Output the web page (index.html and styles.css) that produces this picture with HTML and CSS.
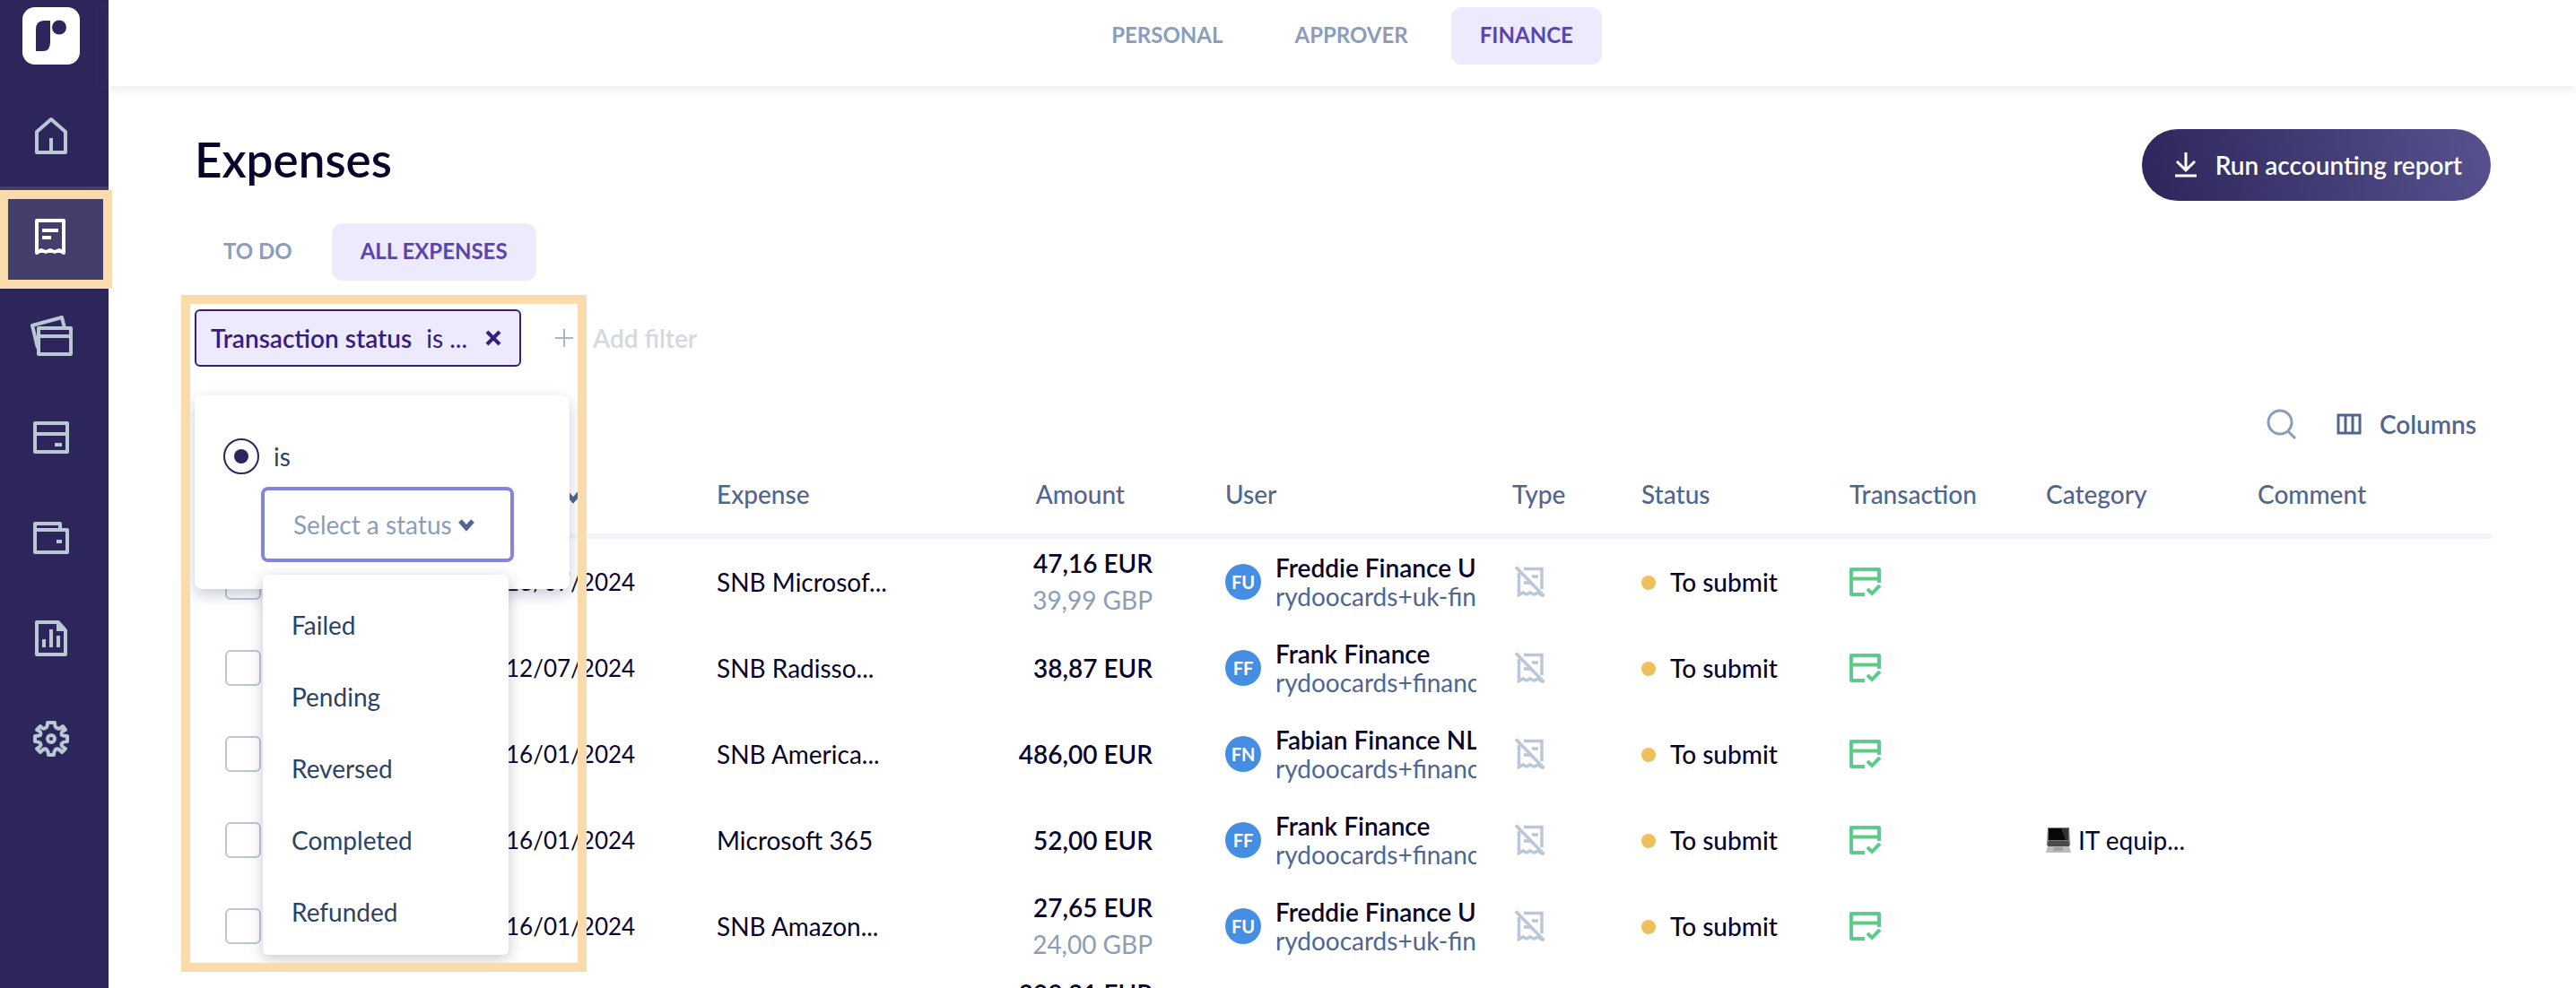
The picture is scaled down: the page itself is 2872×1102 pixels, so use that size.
FILE: index.html
```html
<!DOCTYPE html>
<html lang="en">

<head>
    <meta charset="UTF-8">
    <meta name="viewport" content="width=device-width, initial-scale=1.0">
    <title>Expenses</title>
    <link rel="stylesheet" href="styles.css">
</head>

<body>
    <!-- shared icons for the table rows -->
    <svg class="sprite" aria-hidden="true">
        <symbol id="no-receipt" viewBox="0 0 36 36">
            <g fill="none" stroke="currentColor" stroke-width="3.500">
                <path d="M11 3.500H31V26M5.500 8V32.500L10 30L14 32L18 30L22.500 32L27 30L32 33.500" />
                <path d="M2 1.500L33.500 34M11 19H20M11 12H14M20 12H27" />
            </g>
        </symbol>
        <symbol id="card-check" viewBox="0 0 36 32">
            <g fill="none" stroke="currentColor" stroke-width="4" stroke-linejoin="round">
                <path d="M17 30H2V2H33V17M2 12.500H33" />
                <path d="M20 24L25 29L34 20" stroke-linejoin="miter" />
            </g>
        </symbol>
    </svg>

    <div class="app">
        <nav class="sidebar" aria-label="Main">
            <a href="#" class="logo" aria-label="Home page">
                <svg width="64" height="64" viewBox="0 0 64 64">
                    <rect width="64" height="64" rx="14" fill="#fff" />
                    <path d="M15 25Q15 15 24 15H31V39Q31 49 23 49H15Z" fill="#2d265b" />
                    <circle cx="41" cy="22.500" r="8" fill="#2d265b" />
                </svg>
            </a>
            <a href="#" class="nav-item" aria-label="Home">
                <svg width="48" height="48" viewBox="0 0 48 48">
                    <path d="M8 42V19L24 5L40 19V42ZM24 26V42" />
                </svg>
            </a>
            <a href="#" class="nav-item active" aria-label="Expenses">
                <svg width="48" height="48" viewBox="0 0 48 48">
                    <path d="M8 42V6H38V42L33 39L28 41L23 39L18 41L13 39ZM14 17H32M14 25H24" />
                </svg>
            </a>
            <a href="#" class="nav-item" aria-label="Cards">
                <svg width="48" height="48" viewBox="0 0 48 48">
                    <path d="M9 36L3 11L36 2L39 14M10 14H46V43H10ZM10 23H46" />
                </svg>
            </a>
            <a href="#" class="nav-item" aria-label="Transactions">
                <svg width="48" height="48" viewBox="0 0 48 48">
                    <path d="M6 8H42V40H6ZM6 20H42M28 32H36" />
                </svg>
            </a>
            <a href="#" class="nav-item" aria-label="Wallet">
                <svg width="48" height="48" viewBox="0 0 48 48">
                    <path d="M34 15V8H6V40H42V15H6M30 28H36" />
                </svg>
            </a>
            <a href="#" class="nav-item" aria-label="Reports">
                <svg width="48" height="48" viewBox="0 0 48 48">
                    <path d="M8 6H32L40 15V42H8ZM16 25V34M24 14V34M32 21V34" />
                    <path class="solid" d="M30 5L41 16H30Z" />
                </svg>
            </a>
            <a href="#" class="nav-item" aria-label="Settings">
                <svg width="48" height="48" viewBox="0 0 48 48">
                    <path d="M20 6H28Q28 12 31 12Q33 14 37 10L40 14Q34 16 36 20Q38 21 42 21V27Q38 27 36 29Q34 32 40 35L36 39Q32 34 29 36Q27 38 27 42H21Q21 38 19 36Q16 34 12 39L8 35Q14 32 12 29Q10 27 6 27V21Q10 21 12 20Q14 16 8 14L12 10Q15 14 17 12Q20 12 20 6Z" />
                    <circle cx="24" cy="24" r="4" />
                </svg>
            </a>
        </nav>

        <div class="page">
            <header class="topbar">
                <a href="#" class="tab">PERSONAL</a>
                <a href="#" class="tab">APPROVER</a>
                <a href="#" class="tab selected">FINANCE</a>
            </header>

            <main class="content">
                <div class="title-row">
                    <h1>Expenses</h1>
                    <button class="report-button">
                        <svg width="26" height="28" viewBox="0 0 26 28" fill="none" stroke="currentColor" stroke-width="3">
                            <path d="M13 0V20M3 10L13 20L23 10M1 26H25" />
                        </svg>
                        Run accounting report
                    </button>
                </div>

                <div class="tabs">
                    <a href="#" class="tab">TO DO</a>
                    <a href="#" class="tab selected">ALL EXPENSES</a>
                </div>

                <div class="filters">
                    <div class="chip">
                        <button class="chip-label"><strong>Transaction status</strong><span>is ...</span></button>
                        <button class="chip-remove" aria-label="Remove filter">
                            <svg width="18" height="18" viewBox="0 0 18 18" fill="none" stroke="currentColor" stroke-width="4">
                                <path d="M2 2L16 16M16 2L2 16" />
                            </svg>
                        </button>
                    </div>
                    <button class="add-filter">
                        <svg width="20" height="20" viewBox="0 0 20 20" fill="none" stroke="currentColor" stroke-width="2">
                            <path d="M10 0V20M0 10H20" />
                        </svg>
                        Add filter
                    </button>

                    <div class="popover">
                        <label class="radio-row">
                            <input type="radio" name="operator" checked>
                            is
                        </label>
                        <div class="select-box">
                            <select aria-label="Transaction status">
                                <option>Select a status</option>
                            </select>
                            <svg class="chevron" width="18" height="14" viewBox="0 0 18 14" fill="none" stroke="currentColor" stroke-width="5">
                                <path d="M2 2L9 10L16 2" />
                            </svg>
                            <ul class="menu">
                                <li><button>Failed</button></li>
                                <li><button>Pending</button></li>
                                <li><button>Reversed</button></li>
                                <li><button>Completed</button></li>
                                <li><button>Refunded</button></li>
                            </ul>
                        </div>
                    </div>
                    <div class="highlight"></div>
                </div>

                <div class="toolbar">
                    <button class="search-button" aria-label="Search">
                        <svg width="34" height="34" viewBox="0 0 34 34" fill="none" stroke="currentColor" stroke-width="3">
                            <circle cx="15" cy="15" r="13" />
                            <path d="M24 25L32 33" />
                        </svg>
                    </button>
                    <button class="columns-button">
                        <svg width="28" height="24" viewBox="0 0 28 24" fill="none" stroke="currentColor" stroke-width="3">
                            <path d="M2 2H26V22H2ZM10 2V22M18 2V22" />
                        </svg>
                        Columns
                    </button>
                </div>

                <table class="expenses">
                    <colgroup>
                        <col class="col-check">
                        <col class="col-date">
                        <col class="col-expense">
                        <col class="col-amount">
                        <col class="col-user">
                        <col class="col-type">
                        <col class="col-status">
                        <col class="col-transaction">
                        <col class="col-category">
                        <col>
                    </colgroup>
                    <thead>
                        <tr>
                            <th></th>
                            <th class="sort">
                                <button aria-label="Sort by date">
                                    <svg width="18" height="14" viewBox="0 0 18 14" fill="none" stroke="currentColor" stroke-width="5">
                                        <path d="M2 2L9 10L16 2" />
                                    </svg>
                                </button>
                            </th>
                            <th>Expense</th>
                            <th class="amount">Amount</th>
                            <th>User</th>
                            <th>Type</th>
                            <th>Status</th>
                            <th>Transaction</th>
                            <th>Category</th>
                            <th>Comment</th>
                        </tr>
                    </thead>
                    <tbody id="rows"></tbody>
                </table>
            </main>
        </div>
    </div>

    <script>
        const expenses = [
            { date: '18/07/2024', name: 'SNB Microsof...', amount: '47,16 EUR', original: '39,99 GBP', initials: 'FU', user: 'Freddie Finance UK', email: 'rydoocards+uk-finance' },
            { date: '12/07/2024', name: 'SNB Radisso...', amount: '38,87 EUR', initials: 'FF', user: 'Frank Finance', email: 'rydoocards+finance' },
            { date: '16/01/2024', name: 'SNB America...', amount: '486,00 EUR', initials: 'FN', user: 'Fabian Finance NL', email: 'rydoocards+finance' },
            { date: '16/01/2024', name: 'Microsoft 365', amount: '52,00 EUR', initials: 'FF', user: 'Frank Finance', email: 'rydoocards+finance', category: 'IT equip...' },
            { date: '16/01/2024', name: 'SNB Amazon...', amount: '27,65 EUR', original: '24,00 GBP', initials: 'FU', user: 'Freddie Finance UK', email: 'rydoocards+uk-finance' }
        ];

        const laptop = `
            <svg width="28" height="28" viewBox="0 0 28 28">
                <path d="M2 0H26L27 20H1Z" fill="#77777b" />
                <path d="M3 1H25V14H3Z" fill="#08080a" />
                <path d="M17 1H25V14H22Z" fill="#333336" />
                <path d="M3 15H25L26 21H2Z" fill="#4b4b4e" />
                <path d="M2 21H26L28 28H0Z" fill="#bcbcbc" />
                <path d="M9 22H19V26H8Z" fill="#a0a0a0" />
            </svg>`;

        const rows = expenses.map((item, index) => `
            <tr>
                <td class="check"><input type="checkbox" aria-label="Select expense ${index + 1}"></td>
                <td class="date">${item.date}</td>
                <td>${item.name}</td>
                <td class="amount">${item.amount}${item.original ? `<small>${item.original}</small>` : ''}</td>
                <td>
                    <div class="user">
                        <span class="avatar">${item.initials}</span>
                        <div class="user-text"><strong>${item.user}</strong><span>${item.email}</span></div>
                    </div>
                </td>
                <td class="type"><svg width="36" height="36"><use href="#no-receipt" /></svg></td>
                <td class="status"><span class="dot"></span>To submit</td>
                <td class="transaction"><svg width="36" height="32"><use href="#card-check" /></svg></td>
                <td>${item.category ? `<div class="category">${laptop}${item.category}</div>` : ''}</td>
                <td></td>
            </tr>`);

        // the last row runs off the bottom of the window
        rows.push('<tr><td></td><td></td><td></td><td class="amount">203,21 EUR<small>&nbsp;</small></td><td></td><td></td><td></td><td></td><td></td><td></td></tr>');

        document.getElementById('rows').innerHTML = rows.join('');
    </script>
</body>

</html>
```
FILE: styles.css
```css
* {
    box-sizing: border-box;
}

body {
    margin: 0;
    font-family: 'Lato', sans-serif;
    font-size: 28px;
    line-height: 32px;
    color: #08052b;
    background: #fff;
}

button,
select {
    font: inherit;
    color: inherit;
    background: none;
    border: none;
    padding: 0;
    cursor: pointer;
}

a {
    color: inherit;
    text-decoration: none;
}

svg {
    display: block;
    flex: none;
}

.sprite {
    position: absolute;
    width: 0;
    height: 0;
}

.app {
    display: flex;
    height: 100vh;
    overflow: hidden;
}

/* Sidebar */
.sidebar {
    flex: none;
    display: flex;
    flex-direction: column;
    width: 121px;
    background: #2d265b;
    color: #bac7d5;
}

.logo {
    height: 96px;
    padding: 8px 0 0 25px;
}

.nav-item {
    display: flex;
    align-items: center;
    justify-content: center;
    height: 112px;
    padding-right: 8px;
}

.nav-item svg {
    fill: none;
    stroke: currentColor;
    stroke-width: 4;
    stroke-linejoin: round;
}

.nav-item .solid {
    fill: currentColor;
    stroke: none;
}

.nav-item.active {
    position: relative;
    color: #fff;
    background: #433e6c;
}

.nav-item.active::after {
    content: '';
    position: absolute;
    inset: 4px -4px -2px -1px;
    border: 10px solid #fadbac;
    z-index: 5;
}

/* Top bar and tabs */
.page {
    flex: 1;
    min-width: 0;
}

.topbar {
    display: flex;
    justify-content: center;
    gap: 16px;
    height: 96px;
    padding-top: 8px;
    box-shadow: 0 4px 12px rgba(80, 100, 130, 0.12);
}

.tab {
    height: 64px;
    padding: 0 32px;
    border-radius: 12px;
    font-size: 24px;
    font-weight: 700;
    line-height: 62px;
    color: #8a9dba;
}

.tab.selected {
    color: #5746ad;
    background: #eeeafe;
}

.content {
    padding: 48px 95px 0 96px;
}

.title-row {
    display: flex;
    justify-content: space-between;
    margin-bottom: 25px;
}

h1 {
    margin: 0;
    font-size: 53px;
    font-weight: 600;
    line-height: 68px;
}

.report-button {
    display: flex;
    align-items: center;
    gap: 20px;
    height: 80px;
    padding: 0 32px 0 36px;
    border-radius: 40px;
    font-weight: 600;
    color: #fff;
    background: linear-gradient(75deg, #2d265b, #57528f);
}

.tabs {
    display: flex;
    gap: 12px;
    margin-bottom: 32px;
}

/* Filters */
.filters {
    position: relative;
    display: flex;
    align-items: center;
    gap: 38px;
    height: 64px;
}

.chip {
    display: flex;
    align-items: center;
    gap: 20px;
    height: 64px;
    padding: 0 20px 0 16px;
    border: 2px solid #361d7e;
    border-radius: 6px;
    color: #361d7e;
    background: #eeeafe;
}

.chip-label {
    display: flex;
    gap: 16px;
}

.chip-label strong {
    font-weight: 600;
}

.add-filter {
    display: flex;
    align-items: center;
    gap: 22px;
    font-weight: 600;
    color: #d3d9e2;
}

.add-filter svg {
    color: #a9b5c8;
}

.popover {
    position: absolute;
    top: 96px;
    left: 0;
    z-index: 2;
    width: 418px;
    height: 216px;
    padding: 48px 32px 0;
    border-radius: 8px;
    background: #fff;
    box-shadow: 0 6px 16px rgba(45, 50, 100, 0.25);
}

.radio-row {
    display: flex;
    align-items: center;
    gap: 16px;
    color: #2c4266;
}

.radio-row input {
    display: grid;
    place-items: center;
    appearance: none;
    width: 40px;
    height: 40px;
    margin: 0;
    border: 2px solid #2d265b;
    border-radius: 50%;
}

.radio-row input:checked::before {
    content: '';
    width: 16px;
    height: 16px;
    border-radius: 50%;
    background: #2d265b;
}

.select-box {
    position: relative;
    width: 282px;
    margin: 14px 0 0 42px;
}

.select-box select {
    appearance: none;
    display: block;
    width: 100%;
    height: 84px;
    padding-left: 32px;
    border: 4px solid #8484d9;
    border-radius: 8px;
    color: #8a9dba;
}

.chevron {
    position: absolute;
    top: 36px;
    right: 44px;
    color: #506690;
}

.menu {
    position: absolute;
    top: 98px;
    left: 2px;
    width: 274px;
    margin: 0;
    padding: 16px 0 8px;
    list-style: none;
    border-radius: 6px;
    background: #fff;
    box-shadow: 0 4px 16px rgba(45, 50, 100, 0.28);
}

.menu button {
    width: 100%;
    height: 80px;
    padding-left: 32px;
    text-align: left;
    color: #2c4266;
}

.menu li {
    height: 80px;
}

.highlight {
    position: absolute;
    top: -16px;
    left: -15px;
    z-index: 3;
    width: 452px;
    height: 755px;
    border: 10px solid #fadbac;
    pointer-events: none;
}

/* Table */
.toolbar {
    display: flex;
    align-items: center;
    justify-content: flex-end;
    gap: 44px;
    height: 64px;
    margin-top: 32px;
    padding-right: 16px;
}

.search-button {
    color: #8a9dba;
}

.columns-button {
    display: flex;
    align-items: center;
    gap: 20px;
    font-weight: 600;
    color: #506690;
}

.expenses {
    width: 100%;
    border-collapse: separate;
    border-spacing: 0;
    table-layout: fixed;
}

.col-check {
    width: 347px;
}

.col-date {
    width: 235px;
}

.col-expense {
    width: 301px;
}

.col-amount {
    width: 266px;
}

.col-user {
    width: 320px;
}

.col-type {
    width: 144px;
}

.col-status {
    width: 232px;
}

.col-transaction {
    width: 219px;
}

.col-category {
    width: 236px;
}

.expenses th {
    height: 96px;
    padding: 2px 0 0;
    border-bottom: 6px solid #f1f5fa;
    font-weight: 500;
    text-align: left;
    color: #506690;
}

.expenses th.sort {
    padding-left: 66px;
}

.expenses td {
    height: 96px;
    padding: 0;
    white-space: nowrap;
}

.expenses th.amount {
    padding-right: 112px;
    text-align: right;
}

.expenses td.amount {
    padding-right: 81px;
    font-weight: 600;
    line-height: 41px;
    text-align: right;
}

.amount small {
    display: block;
    font-size: 28px;
    font-weight: 400;
    color: #8a9dba;
}

.expenses .check {
    padding-left: 34px;
}

.check input {
    appearance: none;
    display: block;
    width: 40px;
    height: 40px;
    margin: 0;
    border: 2px solid #bac7d8;
    border-radius: 6px;
}

.expenses .date {
    font-size: 26px;
}

.user {
    display: flex;
    align-items: center;
    gap: 16px;
    width: 280px;
}

.avatar {
    flex: none;
    width: 40px;
    height: 40px;
    border-radius: 50%;
    font-size: 20px;
    font-weight: 700;
    line-height: 40px;
    text-align: center;
    color: #fff;
    background: #448ee4;
}

.user-text {
    flex: 1;
    overflow: hidden;
    color: #506690;
}

.user-text strong {
    display: block;
    font-weight: 600;
    color: #08052b;
}

.expenses .type {
    padding-left: 2px;
    color: #bac7d8;
}

.status {
    font-weight: 500;
}

.dot {
    display: inline-block;
    width: 16px;
    height: 16px;
    margin-right: 16px;
    border-radius: 50%;
    vertical-align: 2px;
    background: #edc05b;
}

.transaction {
    color: #5fcb8b;
}

.category {
    display: flex;
    align-items: center;
    gap: 8px;
}
```
